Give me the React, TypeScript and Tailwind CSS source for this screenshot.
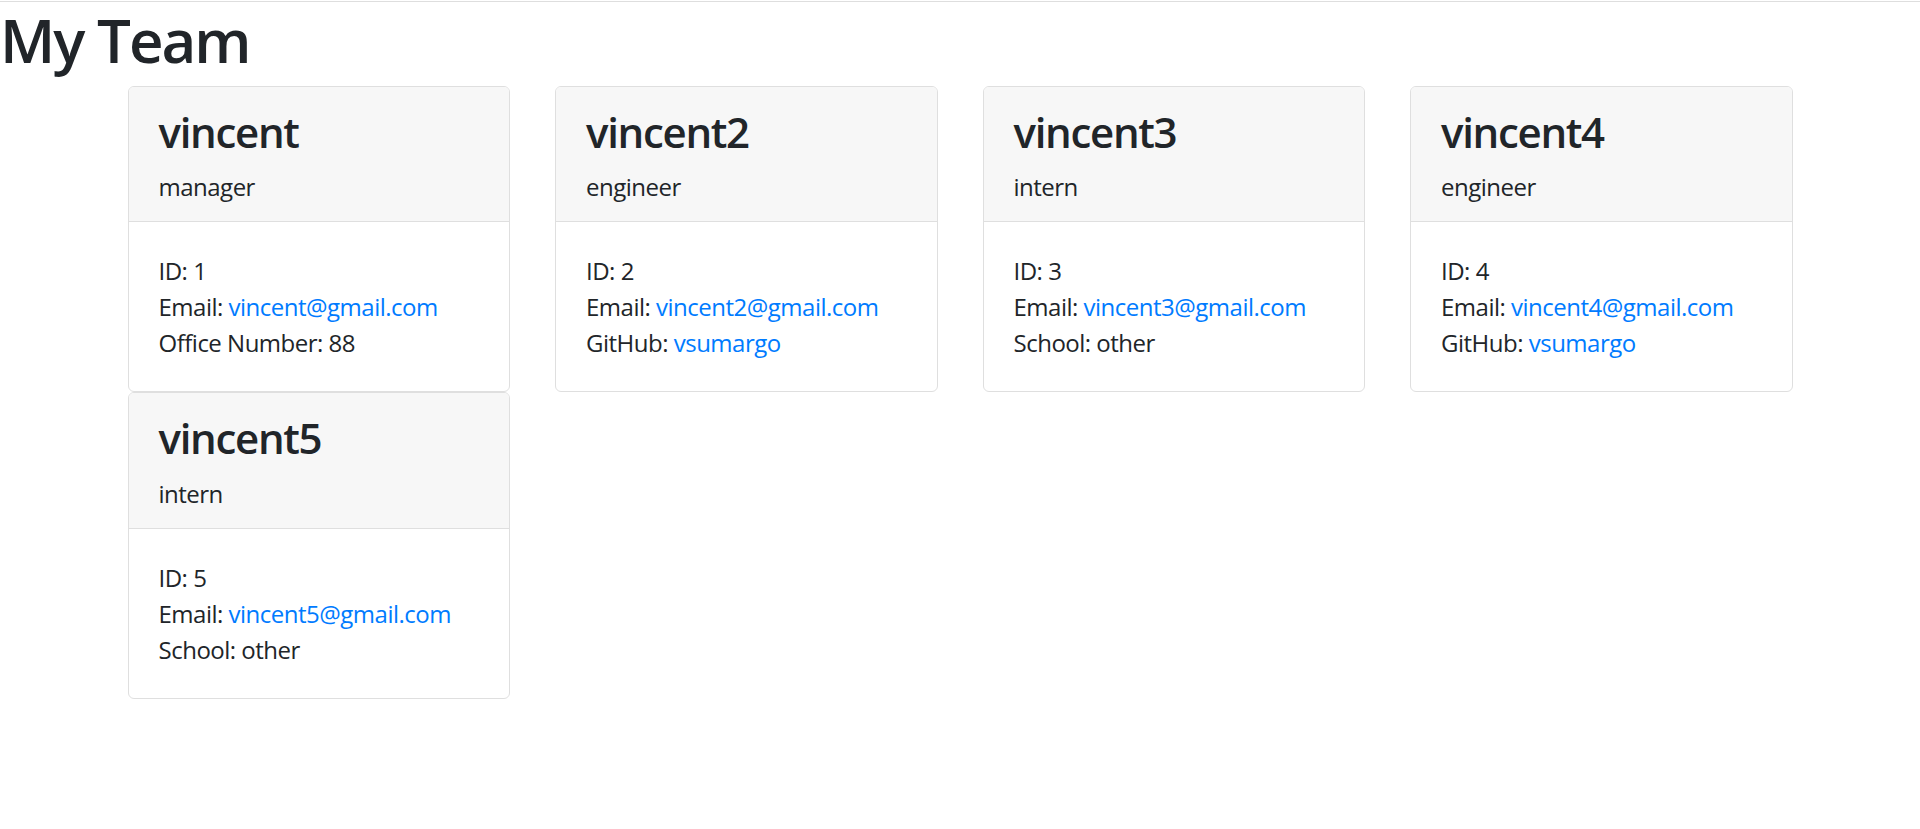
import React from "react";

type Member = {
  name: string;
  role: string;
  id: number;
  email: string;
  extraLabel: string;
  extraValue: string;
  extraLink?: boolean;
};

const members: Member[] = [
  { name: "vincent", role: "manager", id: 1, email: "vincent@gmail.com", extraLabel: "Office Number", extraValue: "88" },
  { name: "vincent2", role: "engineer", id: 2, email: "vincent2@gmail.com", extraLabel: "GitHub", extraValue: "vsumargo", extraLink: true },
  { name: "vincent3", role: "intern", id: 3, email: "vincent3@gmail.com", extraLabel: "School", extraValue: "other" },
  { name: "vincent4", role: "engineer", id: 4, email: "vincent4@gmail.com", extraLabel: "GitHub", extraValue: "vsumargo", extraLink: true },
  { name: "vincent5", role: "intern", id: 5, email: "vincent5@gmail.com", extraLabel: "School", extraValue: "other" },
];

function Card({ m }: { m: Member }) {
  return (
    <div className="w-1/4 px-[22.5px]">
      <div className="rounded-[6px] border border-[#dfdfdf] bg-white">
        <div className="rounded-t-[5px] border-b border-[#dfdfdf] bg-[#f7f7f7] px-[30px] pt-[20px] pb-[16px]">
          <h3 className="mb-[12px] text-[42px] font-semibold leading-[50.4px] tracking-[-1.3px]">{m.name}</h3>
          <div className="text-[24px] leading-[36px] tracking-[-0.5px]">{m.role}</div>
        </div>
        <div className="px-[30px] pt-[31px] pb-[30px] text-[24px] leading-[36px] tracking-[-0.5px]">
          <div>ID: {m.id}</div>
          <div>
            Email: <a href="#" className="text-[#007bff]">{m.email}</a>
          </div>
          <div>
            {m.extraLabel}:{" "}
            {m.extraLink ? (
              <a href="#" className="text-[#007bff]">{m.extraValue}</a>
            ) : (
              m.extraValue
            )}
          </div>
        </div>
      </div>
    </div>
  );
}

export default function App() {
  return (
    <div
      className="min-h-screen bg-white text-[#212529]"
      style={{ fontFamily: '"Open Sans", "Noto Sans", "Liberation Sans", sans-serif' }}
    >
      <div className="mt-px h-px bg-[#dedede]" />
      <h1 className="mb-[10px] pt-[2px] text-[60px] font-semibold leading-[72px] tracking-[-2px]">My Team</h1>
      <div className="mx-auto w-[1710px] px-[22.5px]">
        <div className="-mx-[22.5px] flex flex-wrap">
          {members.map((m) => (
            <Card key={m.id} m={m} />
          ))}
        </div>
      </div>
    </div>
  );
}
